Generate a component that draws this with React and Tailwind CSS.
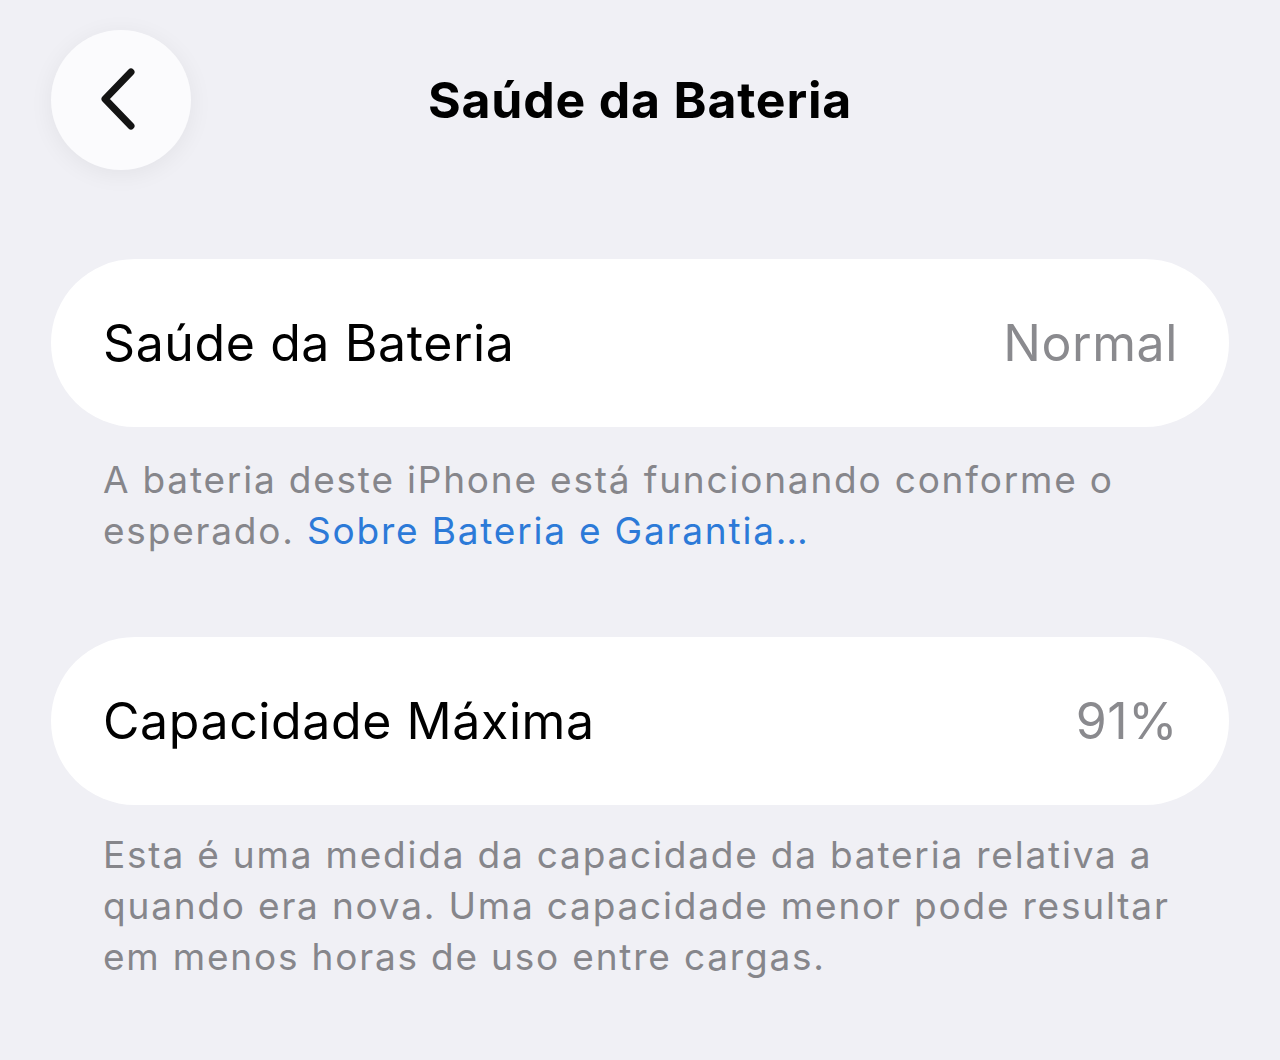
import React from "react";

const BackButton = () => (
  <button className="w-[140px] h-[140px] rounded-full bg-[#fbfbfd] shadow-[0_4px_24px_rgba(0,0,0,0.06)] flex items-center justify-center">
    <svg width="44" height="64" viewBox="0 0 44 64" fill="none" className="-ml-[6px]">
      <path
        d="M35 4 L9 31 L35 58"
        stroke="#141414"
        strokeWidth="7"
        strokeLinecap="round"
        strokeLinejoin="round"
      />
    </svg>
  </button>
);

const Row = ({ label, value }) => (
  <div className="h-[168px] rounded-full bg-white flex items-center justify-between pl-[52px] pr-[51px]">
    <span className="text-[50px] tracking-[0.6px] text-black">{label}</span>
    <span className="text-[50px] tracking-[0.6px] text-[#8a8a8e]">{value}</span>
  </div>
);

export default function App() {
  return (
    <div
      className="w-[1280px] h-[1060px] bg-[#f0f0f5] px-[51px] pt-[30px] overflow-hidden"
      style={{ fontFamily: "Inter, 'Noto Sans', sans-serif" }}
    >
      <div className="grid grid-cols-[140px_1fr_140px] items-center h-[140px]">
        <BackButton />
        <h1 className="text-center text-[50px] font-bold tracking-[0.8px] text-black">
          Saúde da Bateria
        </h1>
        <div />
      </div>

      <div className="mt-[89px]">
        <Row label="Saúde da Bateria" value="Normal" />
        <p className="pl-[52px] pr-[30px] pt-[27px] text-[37px] tracking-[1.8px] leading-[51px] text-[#86868b]">
          A bateria deste iPhone está funcionando conforme o esperado.{" "}
          <span className="text-[#2c7ad8]">Sobre Bateria e Garantia…</span>
        </p>
      </div>

      <div className="mt-[81px]">
        <Row label="Capacidade Máxima" value="91%" />
        <p className="pl-[52px] pr-[20px] pt-[24px] text-[37px] tracking-[1.8px] leading-[51px] text-[#86868b]">
          Esta é uma medida da capacidade da bateria relativa a quando era
          nova. Uma capacidade menor pode resultar em menos horas de uso entre
          cargas.
        </p>
      </div>
    </div>
  );
}
